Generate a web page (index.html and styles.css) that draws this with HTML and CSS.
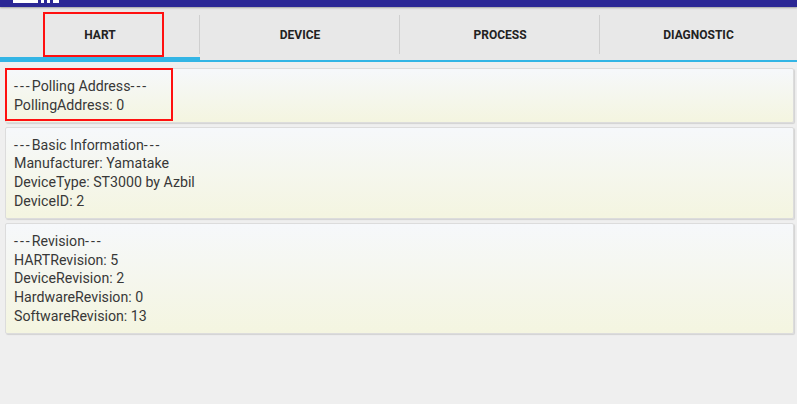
FILE: index.html
```html
<!DOCTYPE html>
<html lang="en">
<head>
    <meta charset="UTF-8">
    <meta name="viewport" content="width=device-width, initial-scale=1.0">
    <title>HART Device</title>
    <link rel="stylesheet" href="styles.css">
</head>
<body>
    <div class="action-bar">
        <div class="logo">
            <span class="logo-a"></span>
            <span class="logo-b"></span>
            <span class="logo-b"></span>
            <span class="logo-c"></span>
        </div>
    </div>

    <div class="tabs">
        <div class="tab active">
            <span>HART</span>
            <div class="mark mark-tab"></div>
        </div>
        <div class="tab"><span>DEVICE</span></div>
        <div class="tab"><span>PROCESS</span></div>
        <div class="tab"><span>DIAGNOSTIC</span></div>
    </div>

    <div class="content">
        <div class="card">
            <p><span class="dash">---</span>Polling Address<span class="dash">---</span></p>
            <p>PollingAddress: 0</p>
            <div class="mark mark-card"></div>
        </div>
        <div class="card">
            <p><span class="dash">---</span>Basic Information<span class="dash">---</span></p>
            <p>Manufacturer: Yamatake</p>
            <p>DeviceType: ST3000 by Azbil</p>
            <p>DeviceID: 2</p>
        </div>
        <div class="card">
            <p><span class="dash">---</span>Revision<span class="dash">---</span></p>
            <p>HARTRevision: 5</p>
            <p>DeviceRevision: 2</p>
            <p>HardwareRevision: 0</p>
            <p>SoftwareRevision: 13</p>
        </div>
    </div>
</body>
</html>
```

FILE: styles.css
```css
/* Reset and basic layout */
* {
    margin: 0;
    padding: 0;
    box-sizing: border-box;
}

body {
    font-family: Roboto, "Liberation Sans", sans-serif;
    background-color: #efefef;
    width: 797px;
    height: 404px;
    overflow: hidden;
}

/* Top action bar (mostly scrolled off) */
.action-bar {
    height: 7px;
    background-color: #2b2795;
    box-shadow: 0 1px 2px rgba(0, 0, 0, 0.3);
    position: relative;
    z-index: 2;
}

.logo {
    display: flex;
    gap: 3px;
    padding-left: 13px;
}

.logo span {
    display: block;
    height: 3px;
    background-color: #fff;
}

.logo-a { width: 25px; }
.logo-b { width: 3px; }
.logo-c { width: 6px; }

/* Tabs */
.tabs {
    display: grid;
    grid-template-columns: 200px 200px 200px 1fr;
    height: 55px;
    background-color: #e8e8e8;
}

.tab {
    position: relative;
    display: flex;
    justify-content: center;
    align-items: center;
    border-bottom: 2px solid #33b5e5;
    font-size: 12px;
    font-weight: bold;
    color: #222;
    padding-top: 2px;
}

.tab + .tab::before {
    content: "";
    position: absolute;
    left: -1px;
    top: 8px;
    bottom: 6px;
    width: 1px;
    background-color: #cfcfcf;
}

.tab.active {
    border-bottom: 5px solid #33b5e5;
    padding-top: 5px;
}

/* Cards */
.content {
    display: flex;
    flex-direction: column;
    gap: 4px;
    padding: 6px 3px 0 5px;
}

.card {
    position: relative;
    padding: 8px 8px 7px;
    background: linear-gradient(to bottom, #f6f8fb, #f4f5e0);
    border: 1px solid #dcdcdc;
    border-radius: 2px;
    box-shadow: 1px 1px 1px rgba(0, 0, 0, 0.12);
    font-size: 14.2px;
    line-height: 18.8px;
    color: #383838;
}

.dash {
    letter-spacing: 2px;
}

/* Red annotation boxes */
.mark {
    position: absolute;
    border: 2px solid #ff1010;
    pointer-events: none;
}

.mark-tab {
    left: 43px;
    top: 5px;
    width: 121px;
    height: 45px;
}

.mark-card {
    left: -1px;
    top: -1px;
    width: 168px;
    height: 53px;
}
```
